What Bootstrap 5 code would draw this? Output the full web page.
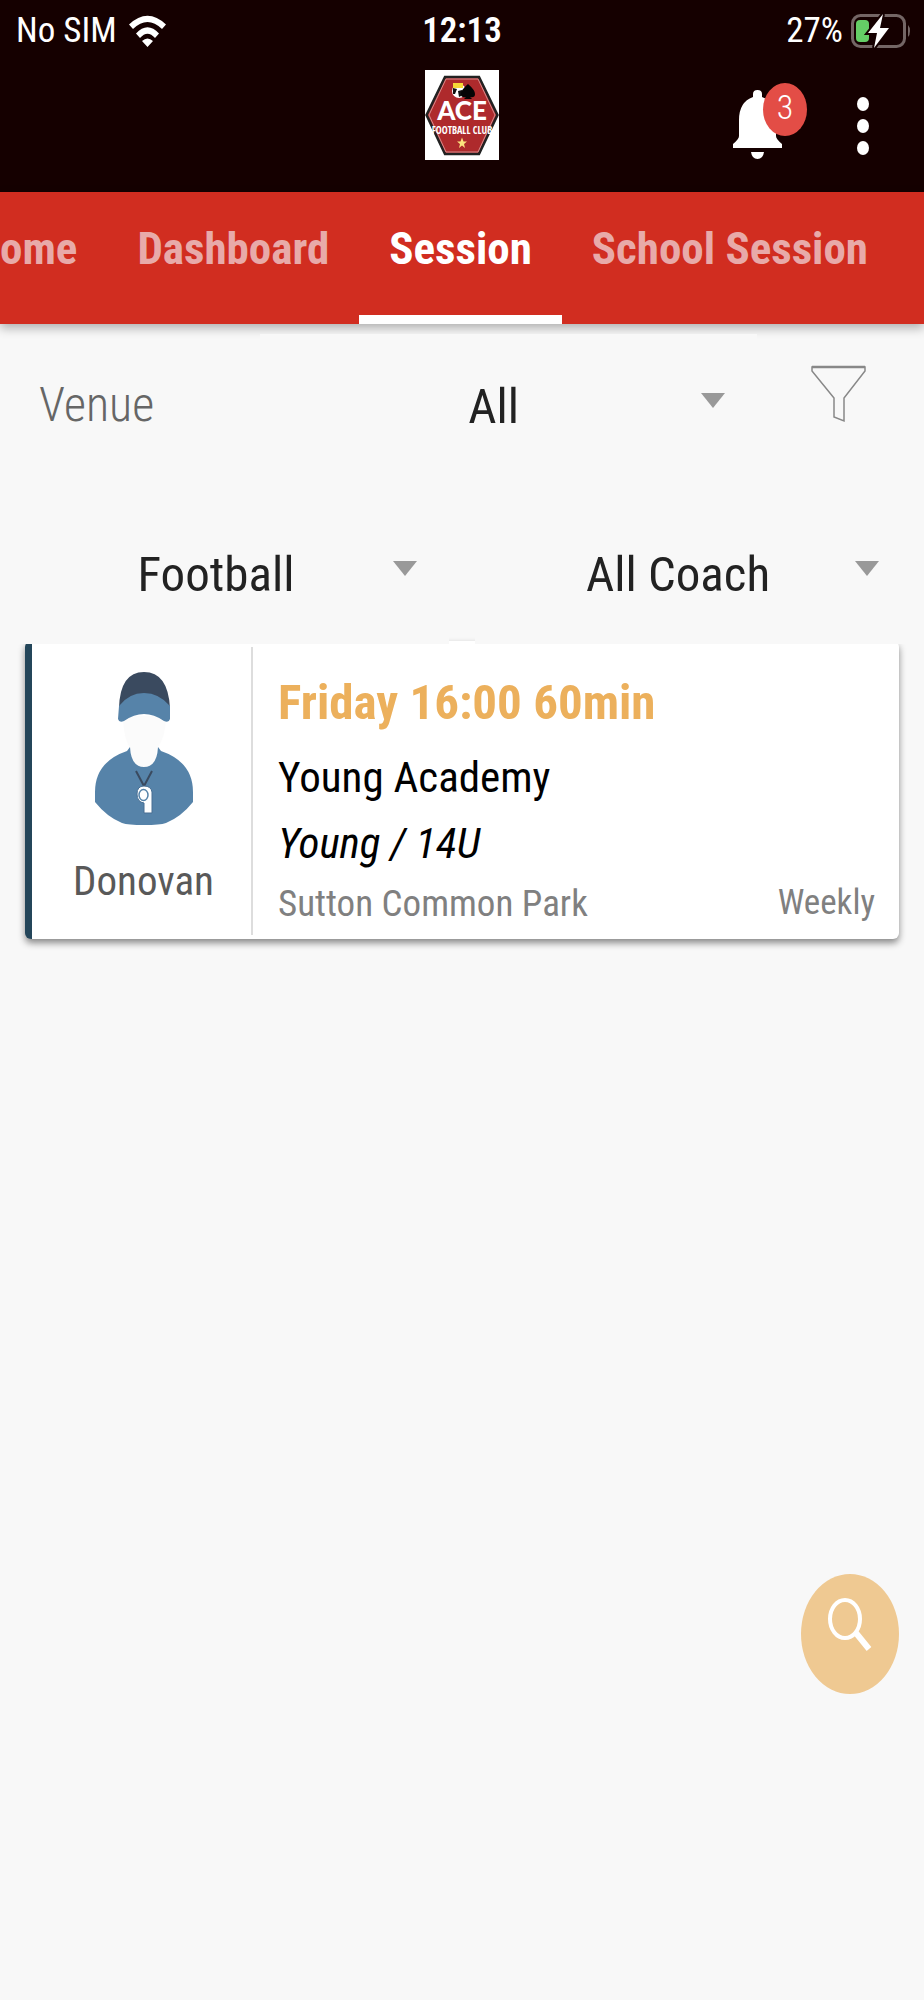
<!DOCTYPE html>
<html lang="en">
<head>
<meta charset="utf-8">
<meta name="viewport" content="width=device-width, initial-scale=1">
<title>ACE Football Club – Sessions</title>
<link href="https://cdn.jsdelivr.net/npm/bootstrap@5.3.0/dist/css/bootstrap.min.css" rel="stylesheet">
<style>
  body { background: #f8f8f8; color: #222; font-family: "Roboto Condensed", "Liberation Sans", sans-serif; }
  svg { display: block; }
  .app-head { background: #150000; height: 192px; }
  .status-line { font-size: 35px; line-height: 62px; }
  .carrier { gap: 12px; }
  .clock { font-weight: 600; }
  .battery { padding-right: 13px; gap: 8px; }
  .bar-icon { color: #fff; background: none; border: 0; padding: 0; }
  .head-tools { gap: 75px; padding: 20px 55px 0 0; }
  .bell-count { top: -7px; left: 30px; width: 44px; height: 53px; border-radius: 50%; background: #e34d46; font-size: 34px; font-weight: 300; line-height: 49px; }
  .tabs-bar { background: #d12d20; box-shadow: 0 4px 10px rgba(0,0,0,.3); overflow: hidden; padding-right: 26px; }
  .tabs-bar .nav-link { color: #e8aaa9; font-size: 45px; font-weight: 700; line-height: 48px; padding: 33px 30px 42px; border-radius: 0; border-bottom: 9px solid transparent; white-space: nowrap; }
  .tabs-bar .nav-link.active { color: #fff; border-bottom-color: #fff; }
  .pick { appearance: none; border: 0; border-radius: 0; text-align: center; text-align-last: center; color: #222; font-size: 49px; line-height: 64px; height: 142px; padding: 3px 32px 0 2px;
    background: #f8f8f8 url("data:image/svg+xml,%3Csvg xmlns='http://www.w3.org/2000/svg' viewBox='0 0 24 15'%3E%3Cpath d='M0 0h24L12 15z' fill='%23999'/%3E%3C/svg%3E") no-repeat right 32px top 59px / 24px 15px; }
  .venue-row { padding-left: 39px; height: 162px; }
  .venue-row label { width: 25%; font-size: 48px; font-weight: 300; color: #666; }
  .filter-btn { width: 167px; padding-right: 3px; padding-bottom: 22px; }
  .sort-row { padding: 0 13px; gap: 26px; margin-top: 16px; z-index: 1; }
  .session { margin: -3px 25px 0; border-left: 7px solid #24465a; border-radius: 6px; background: #fff; box-shadow: 0 4px 7px rgba(0,0,0,.45); color: #000; padding: 6px 0 4px; }
  .coach { width: 221px; border-right: 2px solid #ddd; padding: 25px 0 0 4px; color: #595959; font-size: 41px; line-height: 60px; }
  .coach svg { margin-bottom: 25px; }
  .facts { padding: 18px 24px 0 25px; }
  .when { color: #ecb05c; font-size: 49px; line-height: 76px; }
  .club { font-size: 43px; line-height: 72px; }
  .squad { font-size: 43px; line-height: 60px; }
  .place { font-size: 37px; line-height: 62px; color: #808080; }
  .often { font-size: 35px; line-height: 60px; }
  .fab { right: 25px; bottom: 306px; width: 98px; height: 120px; border: 0; border-radius: 50%; background: #efc992; padding: 0 0 19px 0; }
</style>
</head>
<body class="min-vh-100">
<header class="app-head text-white">
  <div class="row g-0 status-line">
    <div class="carrier col-4 d-flex align-items-center ps-3">
      <span>No SIM</span>
      <svg width="37" height="33" viewBox="0 0 37 33" fill="#fff" aria-label="Wi-Fi"><path d="M0 9.500Q18.500-8 37 9.500L33 14Q18.500 0 4 14zM7 18.500Q18.500 6 30 18.500L26 23Q18.500 14.500 11 23zM13 26Q18.500 21 24 26L18.500 32z"/></svg>
    </div>
    <div class="clock col-4 text-center">12:13</div>
    <div class="battery col-4 d-flex align-items-center justify-content-end">
      <span>27%</span>
      <svg width="60" height="36" viewBox="0 0 60 36" aria-label="Charging"><rect x="1.500" y="2.500" width="52" height="31" rx="8" fill="none" stroke="#746665" stroke-width="3"/><rect x="5" y="7" width="13" height="22" rx="4" fill="#65ce66"/><path d="M57 12v12q2-2 2-6t-2-6" fill="#746665"/><path d="M32 1L17 20h9l-3 15L38 15h-9L32 1z" fill="#fff" stroke="#150000" stroke-width="4" paint-order="stroke"/></svg>
    </div>
  </div>
  <div class="row g-0 pt-2 align-items-start">
    <div class="col-4"></div>
    <div class="col-4 d-flex justify-content-center">
      <svg width="74" height="90" viewBox="0 0 74 90" role="img" aria-label="ACE Football Club">
        <path d="M0 0h74v90H0z" fill="#fff"/>
        <path d="M1.500 45L20 7h34l18.500 38L54 84H20z" fill="#ae2a2c" stroke="#222" stroke-width="2.500"/>
        <path d="M4 45L21 9h32l17 36-17 37H21z" fill="none" stroke="#d58c8d" stroke-width="1"/>
        <circle cx="34" cy="21" r="7" fill="#fff"/><path d="M28 13h10v5H28z" fill="#f6d936"/><path d="M28 18l4 1-2 5h-2zm5 3l4-1 1 5-4 2z" fill="#111"/>
        <path d="M43 14q7 6 7 10 0 4-5 3l2 2h-8l2-2q-5 1-5-3 0-4 7-10" fill="#050505"/>
        <text x="37" y="50" text-anchor="middle" fill="#fff" font-family="Lato, sans-serif" font-weight="900" font-size="26">ACE</text>
        <text x="37" y="64" text-anchor="middle" fill="#fff" font-family="Open Sans Condensed, sans-serif" font-weight="700" font-size="10">FOOTBALL CLUB</text>
        <path d="M37 67.500l1.500 4h3.500l-3 2.500 1 4-3-2.500-3 2.500 1-4-3-2.500h3.500z" fill="#fce47e"/>
      </svg>
    </div>
    <div class="head-tools col-4 d-flex justify-content-end">
      <button class="bar-icon position-relative" type="button" aria-label="Notifications">
        <svg width="49" height="70" viewBox="0 0 49 70" fill="#fff"><path d="M20 7V4q0-4 4.500-4T29 4v3q14 5 14 23v16q0 3 6 8v4H0v-4q6-5 6-8V30Q6 12 20 7M18 62h13q-1 7-6.500 7T18 62"/></svg>
        <span class="bell-count position-absolute">3</span>
      </button>
      <button class="bar-icon" type="button" aria-label="More">
        <svg width="12" height="70" viewBox="0 0 12 70" fill="#fff"><ellipse cx="6" cy="14" rx="6" ry="7"/><ellipse cx="6" cy="36" rx="6" ry="7"/><ellipse cx="6" cy="58" rx="6" ry="7"/></svg>
      </button>
    </div>
  </div>
</header>

<nav class="tabs-bar nav flex-nowrap justify-content-end">
  <a class="nav-link" href="#">Home</a>
  <a class="nav-link" href="#">Dashboard</a>
  <a class="nav-link active" aria-current="page" href="#">Session</a>
  <a class="nav-link" href="#">School Session</a>
</nav>

<main>
  <div class="venue-row d-flex align-items-center">
    <label for="venue">Venue</label>
    <select id="venue" class="pick flex-grow-1"><option>All</option></select>
    <button class="bar-icon filter-btn d-flex justify-content-center" type="button" aria-label="Filter">
      <svg width="56" height="58" viewBox="0 0 56 58" fill="none" stroke="#888" stroke-width="1.500"><path d="M1 2h53v4L33 33v23l-10-4V33L1 6z"/><path d="M1 2h53" stroke-width="2.500"/></svg>
    </button>
  </div>
  <div class="sort-row d-flex position-relative">
    <select class="pick w-50" aria-label="Activity"><option>Football</option></select>
    <select class="pick w-50" aria-label="Coach"><option>All Coach</option></select>
  </div>

  <article class="session d-flex">
    <div class="coach d-flex flex-column align-items-center flex-shrink-0">
      <svg width="98" height="154" viewBox="0 0 98 154" aria-hidden="true">
        <path d="M28 44h43q0 22-10 34v10q-3 10-12 10T36 88V78Q28 66 28 44" fill="#fbfbfb"/>
        <path d="M24 36Q25 0 49 0t26 36Q49 12 24 36" fill="#3a4a5f"/>
        <path d="M24 34Q34 21 49 21t26 13v13q-1 4-6 2-20-14-40 0-5 2-6-2z" fill="#5683a9"/>
        <path d="M35 75q1 20 14 20t14-20l3 4q32 11 32 41v10q-12 15-27 21-6 2-22 2t-22-2Q12 145 0 130v-10Q0 90 32 79z" fill="#5683a9"/>
        <path d="M41 99l8 15 8-15" fill="none" stroke="#3a4a5f" stroke-width="2"/>
        <path d="M49 114q7 0 8 6v21h-8v-10q-7-1-7-9 0-8 7-8" fill="#fff" stroke="#496f93" stroke-width="1"/>
        <ellipse cx="48.500" cy="123" rx="4.500" ry="5.500" fill="#fff" stroke="#5683a9" stroke-width="1.500"/>
      </svg>
      <span>Donovan</span>
    </div>
    <div class="facts flex-grow-1">
      <div class="when fw-bold">Friday 16:00 60min</div>
      <div class="club">Young Academy</div>
      <div class="squad fst-italic">Young / 14U</div>
      <div class="place d-flex justify-content-between"><span>Sutton Common Park</span><span class="often">Weekly</span></div>
    </div>
  </article>
</main>

<button class="fab position-fixed d-flex align-items-center justify-content-center" type="button" aria-label="Search">
  <svg width="44" height="54" viewBox="0 0 44 54" fill="none" stroke="#fff"><ellipse cx="17" cy="21" rx="15" ry="19" stroke-width="4"/><path d="M28 35l13 16" stroke-width="6"/></svg>
</button>
<script src="https://cdn.jsdelivr.net/npm/bootstrap@5.3.0/dist/js/bootstrap.bundle.min.js"></script>
</body>
</html>
